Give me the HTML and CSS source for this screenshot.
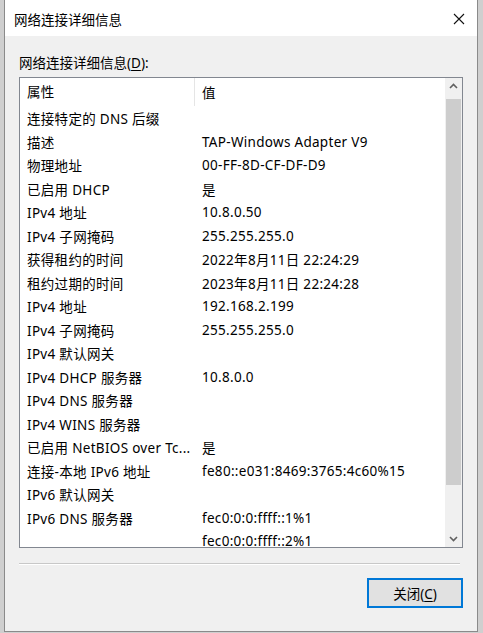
FILE: index.html
```html
<!DOCTYPE html>
<html>
<head>
    <meta charset="utf-8">
    <title>网络连接详细信息</title>
    <link rel="stylesheet" href="styles.css">
</head>
<body>
    <div class="window">
        <div class="titlebar">
            <span class="title">网络连接详细信息</span>
            <svg class="close" width="12" height="12" viewBox="0 0 12 12">
                <path d="M1 1 L11 11 M11 1 L1 11" stroke="#111" stroke-width="1.1" fill="none"/>
            </svg>
        </div>
        <div class="content">
            <div class="label">网络连接详细信息(<u>D</u>):</div>
            <div class="listview">
                <div class="list">
                    <div class="row head">
                        <div class="prop">属性</div>
                        <div class="val">值</div>
                    </div>
                    <div class="row"><div class="prop">连接特定的 DNS 后缀</div><div class="val"></div></div>
                    <div class="row"><div class="prop">描述</div><div class="val">TAP-Windows Adapter V9</div></div>
                    <div class="row"><div class="prop">物理地址</div><div class="val">00-FF-8D-CF-DF-D9</div></div>
                    <div class="row"><div class="prop">已启用 DHCP</div><div class="val">是</div></div>
                    <div class="row"><div class="prop">IPv4 地址</div><div class="val">10.8.0.50</div></div>
                    <div class="row"><div class="prop">IPv4 子网掩码</div><div class="val">255.255.255.0</div></div>
                    <div class="row"><div class="prop">获得租约的时间</div><div class="val">2022年8月11日 22:24:29</div></div>
                    <div class="row"><div class="prop">租约过期的时间</div><div class="val">2023年8月11日 22:24:28</div></div>
                    <div class="row"><div class="prop">IPv4 地址</div><div class="val">192.168.2.199</div></div>
                    <div class="row"><div class="prop">IPv4 子网掩码</div><div class="val">255.255.255.0</div></div>
                    <div class="row"><div class="prop">IPv4 默认网关</div><div class="val"></div></div>
                    <div class="row"><div class="prop">IPv4 DHCP 服务器</div><div class="val">10.8.0.0</div></div>
                    <div class="row"><div class="prop">IPv4 DNS 服务器</div><div class="val"></div></div>
                    <div class="row"><div class="prop">IPv4 WINS 服务器</div><div class="val"></div></div>
                    <div class="row"><div class="prop">已启用 NetBIOS over Tc...</div><div class="val">是</div></div>
                    <div class="row"><div class="prop">连接-本地 IPv6 地址</div><div class="val">fe80::e031:8469:3765:4c60%15</div></div>
                    <div class="row"><div class="prop">IPv6 默认网关</div><div class="val"></div></div>
                    <div class="row"><div class="prop">IPv6 DNS 服务器</div><div class="val">fec0:0:0:ffff::1%1</div></div>
                    <div class="row"><div class="prop"></div><div class="val">fec0:0:0:ffff::2%1</div></div>
                </div>
                <div class="scrollbar">
                    <svg class="arrow" width="17" height="17" viewBox="0 0 17 17">
                        <path d="M5 10 L8.5 6.5 L12 10" stroke="#606060" stroke-width="1.6" fill="none"/>
                    </svg>
                    <div class="track">
                        <div class="thumb"></div>
                    </div>
                    <svg class="arrow" width="17" height="17" viewBox="0 0 17 17">
                        <path d="M5 7 L8.5 10.5 L12 7" stroke="#606060" stroke-width="1.6" fill="none"/>
                    </svg>
                </div>
            </div>
            <div class="separator"></div>
            <div class="buttons">
                <button class="button">关闭(<u>C</u>)</button>
            </div>
        </div>
    </div>
</body>
</html>
```

FILE: styles.css
```css
html {
    font-family: "Noto Sans", "Noto Sans CJK SC", sans-serif;
    font-size: 13.5px;
    letter-spacing: 0.3px;
    color: #000;
}

body {
    margin: 0;
    background: #cfcfcf;
    height: 633px;
    overflow: hidden;
}

.window {
    margin-left: 4px;
    width: 472px;
    height: 631px;
    border: 1px solid #8a8a8a;
    border-top: none;
    background: #f0f0f0;
    display: flex;
    flex-direction: column;
}

.titlebar {
    height: 36px;
    background: #fff;
    display: flex;
    align-items: center;
    justify-content: space-between;
    padding: 0 12px 0 9px;
}

.title {
    margin-top: 1px;
    letter-spacing: 0;
}

.close {
    margin-top: 2px;
}

.content {
    padding: 17px 14px 0 14px;
    display: flex;
    flex-direction: column;
}

.label {
    height: 24px;
    line-height: 20px;
    letter-spacing: 0;
}

.label u,
.button u {
    text-decoration-thickness: 1px;
    text-underline-offset: 2px;
}

.listview {
    height: 469px;
    border: 1px solid #828790;
    background: #fff;
    display: flex;
    overflow: hidden;
}

.list {
    flex: 1;
    overflow: hidden;
}

.row {
    display: flex;
    height: 23.5px;
    align-items: center;
    white-space: nowrap;
}

.prop {
    width: 168px;
    padding-left: 7px;
    flex-shrink: 0;
}

.val {
    padding-left: 7px;
}

.head {
    height: 28px;
    margin-bottom: 0.5px;
}

.head .prop {
    width: 167px;
    border-right: 1px solid #e5e5e5;
    height: 28px;
    line-height: 28px;
}

.scrollbar {
    width: 17px;
    background: #f0f0f0;
    display: flex;
    flex-direction: column;
}

.arrow {
    display: block;
}

.track {
    flex: 1;
}

.thumb {
    margin: 4px 1px 0 1px;
    height: 386px;
    background: #cdcdcd;
}

.separator {
    margin-top: 15px;
    height: 1px;
    background: #c8c8c8;
    margin-right: 3px;
    border-bottom: 1px solid #fff;
}

.buttons {
    display: flex;
    justify-content: flex-end;
    padding-top: 13px;
}

.button {
    width: 96px;
    height: 30px;
    font-family: "Noto Sans", "Noto Sans CJK SC", sans-serif;
    font-size: 13.5px;
    background: #e1e1e1;
    border: 2px solid #0078d7;
    padding: 0;
    color: #000;
}
```
